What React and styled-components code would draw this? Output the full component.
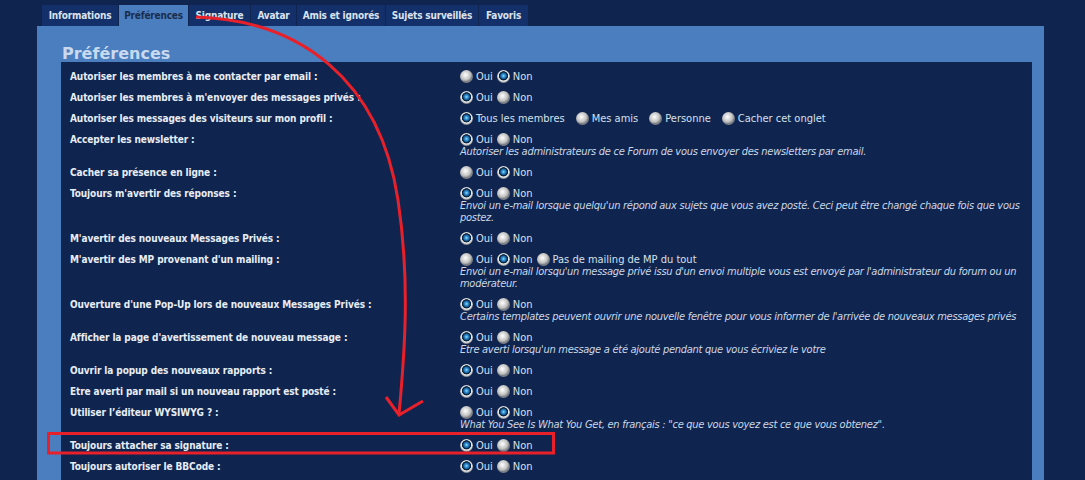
import React from "react";
import styled, { createGlobalStyle } from "styled-components";

const Global = createGlobalStyle`
  html, body { margin: 0; padding: 0; overflow: hidden; background: #0f2550; }
  body { font-family: "DejaVu Sans Condensed", "DejaVu Sans", sans-serif; font-stretch: condensed; }
`;

const Page = styled.div`
  position: relative;
  width: 1085px;
  height: 480px;
  padding: 5px 41px 0 37px;
  box-sizing: border-box;
`;

const TabBar = styled.ul`
  display: flex;
  gap: 1px;
  margin: 0 0 0 5px;
  padding: 0;
  list-style: none;
  height: 21px;
`;

const Tab = styled.li`
  display: flex;
  align-items: center;
  justify-content: center;
  width: ${(p) => p.$w}px;
  height: 21px;
  font-size: 10px;
  font-weight: bold;
  letter-spacing: -0.2px;
  color: ${(p) => (p.$active ? "#1a2d4d" : "#dbe3ee")};
  background: ${(p) => (p.$active ? "#4a7ebf" : "#14306a")};
  white-space: nowrap;
`;

const Panel = styled.div`
  background: #4a7ebf;
  padding: 0 12px 0 24px;
`;

const Title = styled.h1`
  margin: 0;
  height: 36px;
  box-sizing: border-box;
  padding: 20px 0 0 1px;
  font-family: "DejaVu Sans", sans-serif;
  font-stretch: normal;
  font-size: 16px;
  line-height: 16px;
  font-weight: bold;
  color: #c9d9ee;
`;

const Inner = styled.div`
  background: #0f2550;
  padding: 4px 0 20px;
`;

const Row = styled.div`
  display: grid;
  grid-template-columns: 399px 1fr;
`;

const Label = styled.div`
  padding: 4px 0 0 9px;
  font-size: 10px;
  line-height: 13px;
  font-weight: bold;
  letter-spacing: -0.1px;
  color: #e7edf5;
`;

const Value = styled.div`
  padding: 4px 8px 4px 0;
`;

const Options = styled.div`
  display: flex;
  align-items: center;
  gap: ${(p) => p.$gap}px;
  height: 13px;
`;

const Option = styled.span`
  display: inline-flex;
  align-items: center;
  gap: 3px;
  font-size: 11px;
  line-height: 13px;
  color: #d6e0ec;
  white-space: nowrap;
`;

const Radio = styled.span`
  width: 13px;
  height: 13px;
  border-radius: 50%;
  flex: none;
  background: ${(p) =>
    p.$checked
      ? "radial-gradient(circle at 50% 45%, #9adcff 0, #3597d6 1.5px, #145c96 3px, #0b2440 3.7px, #0b2440 4.3px, #eeeeee 4.9px, #c4c4c4 6px, #8a8f96 6.5px)"
      : "radial-gradient(circle at 42% 38%, #ffffff 0, #e6e6e6 2px, #c2c2c2 4.8px, #9a9a9a 6.2px, #7c8088 6.5px)"};
`;

const Desc = styled.div`
  font-size: 11px;
  line-height: 12px;
  font-style: italic;
  letter-spacing: -0.27px;
  color: #cbd7e6;
`;

const Overlay = styled.svg`
  position: absolute;
  left: 0;
  top: 0;
  pointer-events: none;
`;

const tabs = [
  ["Informations", 76],
  ["Préférences", 69, true],
  ["Signature", 61],
  ["Avatar", 45],
  ["Amis et ignorés", 88],
  ["Sujets surveillés", 92],
  ["Favoris", 49],
];

const yn = (on) => [
  ["Oui", on === 0],
  ["Non", on === 1],
];

const rows = [
  { label: "Autoriser les membres à me contacter par email :", opts: yn(1) },
  { label: "Autoriser les membres à m'envoyer des messages privés :", opts: yn(0) },
  {
    label: "Autoriser les messages des visiteurs sur mon profil :",
    gap: 11,
    opts: [
      ["Tous les membres", true],
      ["Mes amis", false],
      ["Personne", false],
      ["Cacher cet onglet", false],
    ],
  },
  {
    label: "Accepter les newsletter :",
    opts: yn(0),
    desc: "Autoriser les administrateurs de ce Forum de vous envoyer des newsletters par email.",
  },
  { label: "Cacher sa présence en ligne :", opts: yn(1) },
  {
    label: "Toujours m'avertir des réponses :",
    opts: yn(0),
    desc: "Envoi un e-mail lorsque quelqu'un répond aux sujets que vous avez posté. Ceci peut être changé chaque fois que vous postez.",
  },
  { label: "M'avertir des nouveaux Messages Privés :", opts: yn(0) },
  {
    label: "M'avertir des MP provenant d'un mailing :",
    opts: [
      ["Oui", false],
      ["Non", true],
      ["Pas de mailing de MP du tout", false],
    ],
    desc: "Envoi un e-mail lorsqu'un message privé issu d'un envoi multiple vous est envoyé par l'administrateur du forum ou un modérateur.",
  },
  {
    label: "Ouverture d'une Pop-Up lors de nouveaux Messages Privés :",
    opts: yn(0),
    desc: "Certains templates peuvent ouvrir une nouvelle fenêtre pour vous informer de l'arrivée de nouveaux messages privés",
  },
  {
    label: "Afficher la page d'avertissement de nouveau message :",
    opts: yn(0),
    desc: "Etre averti lorsqu'un message a été ajouté pendant que vous écriviez le votre",
  },
  { label: "Ouvrir la popup des nouveaux rapports :", opts: yn(0) },
  { label: "Etre averti par mail si un nouveau rapport est posté :", opts: yn(0) },
  {
    label: "Utiliser l’éditeur WYSIWYG ? :",
    opts: yn(1),
    desc: 'What You See Is What You Get, en français : "ce que vous voyez est ce que vous obtenez".',
  },
  { label: "Toujours attacher sa signature :", opts: yn(0) },
  { label: "Toujours autoriser le BBCode :", opts: yn(0) },
];

export default function App() {
  return (
    <Page>
      <Global />
      <TabBar>
        {tabs.map(([t, w, active]) => (
          <Tab key={t} $w={w} $active={active}>
            {t}
          </Tab>
        ))}
      </TabBar>
      <Panel>
        <Title>Préférences</Title>
        <Inner>
          {rows.map((r) => (
            <Row key={r.label}>
              <Label>{r.label}</Label>
              <Value>
                <Options $gap={r.gap || 4}>
                  {r.opts.map(([o, c]) => (
                    <Option key={o}>
                      <Radio $checked={c} />
                      {o}
                    </Option>
                  ))}
                </Options>
                {r.desc && <Desc>{r.desc}</Desc>}
              </Value>
            </Row>
          ))}
        </Inner>
      </Panel>
      <Overlay width="1085" height="480" viewBox="0 0 1085 480">
        <g fill="none" stroke="#e8202a" strokeWidth="3">
          <path d="M196 17 C300 20 380 80 398 200 C410 280 405 350 399 414" />
          <path d="M386 397 L399 415 L423 401" strokeLinejoin="miter" />
          <rect x="48.5" y="433.5" width="505" height="19.5" />
        </g>
      </Overlay>
    </Page>
  );
}
